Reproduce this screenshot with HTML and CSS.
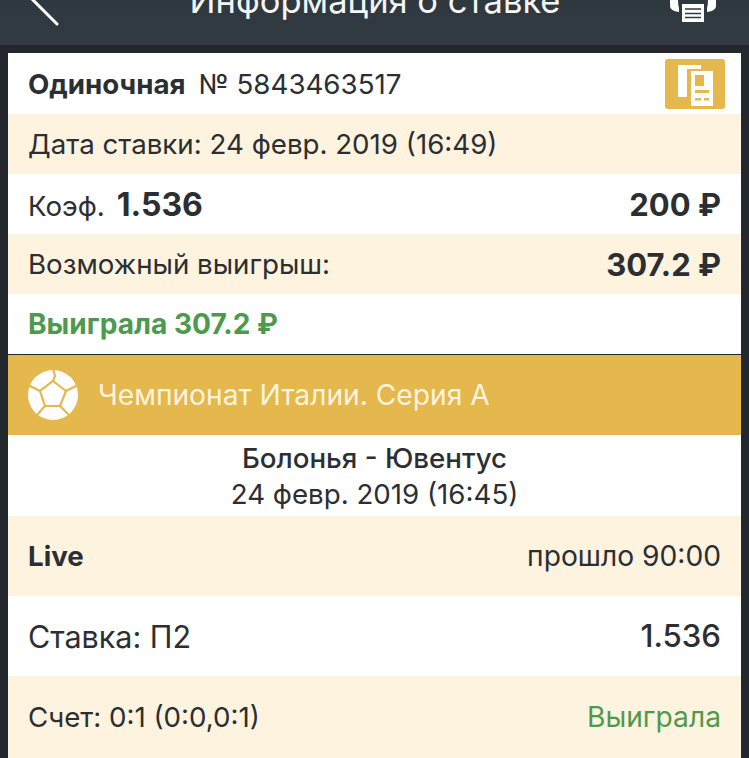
FILE: index.html
```html
<!DOCTYPE html>
<html lang="ru">
<head>
    <meta charset="UTF-8">
    <meta name="viewport" content="width=device-width, initial-scale=1.0">
    <title>Информация о ставке</title>
    <link rel="stylesheet" href="styles.css">
</head>
<body>
    <header class="topbar">
        <svg class="back-icon" width="34" height="30" viewBox="0 0 34 30">
            <path d="M29 28 L1 0" fill="none" stroke="#fff" stroke-width="3" stroke-linecap="round"/>
        </svg>
        <h1>Информация о ставке</h1>
        <svg class="print-icon" width="46" height="24" viewBox="0 0 46 24">
            <path d="M0 0 H8 Q8 5 9 8 V12 Q0 11 0 6 Z M46 0 H38 Q38 5 37 8 V12 Q46 11 46 6 Z" fill="#fff"/>
            <rect x="12" y="4" width="22" height="18" fill="#fff"/>
            <path d="M15 9 H31 M15 13.5 H31 M15 17.5 H31" stroke="#2f383e" stroke-width="1.6"/>
        </svg>
    </header>
    <main class="card">
        <div class="row row-top">
            <div class="bet-id"><strong>Одиночная</strong><span>№ 5843463517</span></div>
            <div class="copy-btn">
                <svg width="60" height="50" viewBox="0 0 60 50">
                    <path d="M13 6 H36 V10 H22 V38 H13 Z" fill="#fff"/>
                    <rect x="26" y="12" width="22" height="35" fill="#fff"/>
                    <rect x="30" y="16" width="9" height="11" fill="#e4b84d"/>
                    <rect x="30" y="31" width="14" height="3" fill="#e4b84d"/>
                    <rect x="30" y="39" width="6" height="2.5" fill="#e4b84d"/>
                    <rect x="39" y="39" width="5" height="2.5" fill="#e4b84d"/>
                </svg>
            </div>
        </div>
        <div class="row cream">Дата ставки: 24 февр. 2019 (16:49)</div>
        <div class="row">
            <div>Коэф. <b class="coef">1.536</b></div>
            <b class="amount">200 ₽</b>
        </div>
        <div class="row cream">
            <div>Возможный выигрыш:</div>
            <b class="amount">307.2 ₽</b>
        </div>
        <div class="row result"><b>Выиграла 307.2 ₽</b></div>
        <div class="league">
            <svg class="ball" width="52" height="52" viewBox="0 0 52 52">
                <circle cx="26" cy="26" r="25" fill="#fff"/>
                <path d="M26 12 L39 22 L33 37 L18 37 L13 22 Z" fill="none" stroke="#e4b84d" stroke-width="2.2"/>
                <path d="M26 12 L28 7 L26 0 M39 22 L51 16 M33 37 L42 46 M18 37 L10 46 M13 22 L1 16" fill="none" stroke="#e4b84d" stroke-width="2.2"/>
            </svg>
            <span>Чемпионат Италии. Серия А</span>
        </div>
        <div class="match">
            <div class="teams">Болонья - Ювентус</div>
            <div>24 февр. 2019 (16:45)</div>
        </div>
        <div class="row row-tall cream">
            <b>Live</b>
            <div class="status">прошло 90:00</div>
        </div>
        <div class="row row-tall">
            <div class="bet-name">Ставка: П2</div>
            <div class="bet-coef">1.536</div>
        </div>
        <div class="row row-tall row-last cream">
            <div>Счет: 0:1 (0:0,0:1)</div>
            <div class="won">Выиграла</div>
        </div>
    </main>
</body>
</html>
```

FILE: styles.css
```css
html, body {
    height: 100%;
}

body {
    margin: 0;
    background-color: #22282d;
    font-family: Inter, Roboto, sans-serif;
    font-size: 27.7px;
    color: #2b2f33;
    overflow: hidden;
}

.topbar {
    height: 45px;
    display: flex;
    justify-content: space-between;
    align-items: flex-end;
    padding: 0 33px 0 28px;
    background: linear-gradient(#2f383e, #323b41);
    overflow: hidden;
}

.topbar h1 {
    margin: 0 0 26px;
    font-size: 34.5px;
    font-weight: 400;
    line-height: 36px;
    color: #f4f5f5;
    white-space: nowrap;
}

.back-icon {
    margin: 0 18px 19px 0;
}

.print-icon {
    margin-bottom: 21px;
}

.card {
    margin: 8px 8px 0;
    background-color: #fff;
}

.row {
    height: 60px;
    box-sizing: border-box;
    display: flex;
    justify-content: space-between;
    align-items: center;
    padding: 0 20px;
}

.row-tall {
    height: 80px;
}

.row-last {
    height: 82px;
}

.cream {
    background-color: #fdf3df;
}

.row-top {
    height: 61px;
    padding-right: 16px;
}

.bet-id strong {
    margin-right: 13px;
}

.copy-btn {
    width: 60px;
    height: 50px;
    border-radius: 3px;
    background-color: #e4b84d;
}

.copy-btn svg {
    display: block;
}

.coef {
    margin-left: 4px;
    font-size: 32px;
}

.amount {
    font-size: 31px;
}

.result {
    font-size: 28.1px;
    color: #4d9a4f;
}

.league {
    height: 81px;
    display: flex;
    align-items: center;
    gap: 19px;
    padding-left: 19px;
    border-top: 1px solid #22282d;
    box-sizing: border-box;
    background-color: #e4b84d;
    font-size: 28.2px;
    color: #fdf3df;
}

.match {
    height: 81px;
    display: flex;
    flex-direction: column;
    justify-content: center;
    align-items: center;
    line-height: 36px;
}

.teams {
    font-weight: 500;
}

.status {
    font-size: 28.2px;
}

.bet-name {
    font-size: 30.5px;
}

.bet-coef {
    font-size: 31.2px;
    font-weight: 500;
}

.won {
    font-size: 28.2px;
    color: #4d9a4f;
}
```
